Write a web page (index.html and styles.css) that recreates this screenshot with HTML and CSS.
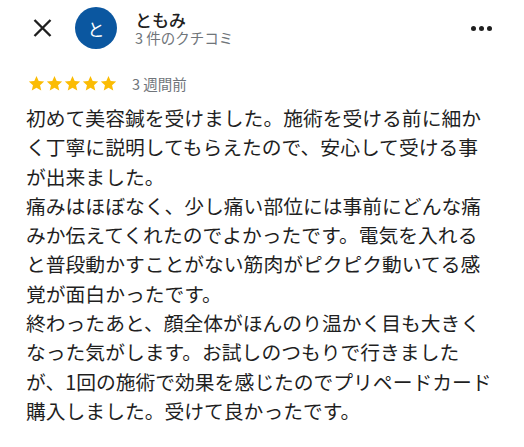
FILE: index.html
```html
<!DOCTYPE html>
<html lang="ja">
<head>
<meta charset="utf-8">
<link rel="stylesheet" href="styles.css">
</head>
<body>
<div class="review">
  <div class="header">
    <svg class="close" width="19" height="18" viewBox="0 0 19 18"><path d="M1.5 1 L17.5 17 M17.5 1 L1.5 17" stroke="#1f1f1f" stroke-width="2.4" fill="none"/></svg>
    <div class="avatar">と</div>
    <div class="info">
      <div class="name">ともみ</div>
      <div class="sub">3 件のクチコミ</div>
    </div>
    <div class="more"><span></span><span></span><span></span></div>
  </div>
  <div class="meta">
    <div class="stars">
      <svg width="17" height="17" viewBox="0 0 24 24"><path d="M12 1.5l3.1 7.1 7.7.7-5.8 5.1 1.7 7.6L12 18l-6.7 4 1.7-7.6-5.8-5.1 7.7-.7z" fill="#fbbc04"/></svg>
      <svg width="17" height="17" viewBox="0 0 24 24"><path d="M12 1.5l3.1 7.1 7.7.7-5.8 5.1 1.7 7.6L12 18l-6.7 4 1.7-7.6-5.8-5.1 7.7-.7z" fill="#fbbc04"/></svg>
      <svg width="17" height="17" viewBox="0 0 24 24"><path d="M12 1.5l3.1 7.1 7.7.7-5.8 5.1 1.7 7.6L12 18l-6.7 4 1.7-7.6-5.8-5.1 7.7-.7z" fill="#fbbc04"/></svg>
      <svg width="17" height="17" viewBox="0 0 24 24"><path d="M12 1.5l3.1 7.1 7.7.7-5.8 5.1 1.7 7.6L12 18l-6.7 4 1.7-7.6-5.8-5.1 7.7-.7z" fill="#fbbc04"/></svg>
      <svg width="17" height="17" viewBox="0 0 24 24"><path d="M12 1.5l3.1 7.1 7.7.7-5.8 5.1 1.7 7.6L12 18l-6.7 4 1.7-7.6-5.8-5.1 7.7-.7z" fill="#fbbc04"/></svg>
    </div>
    <span class="date">3 週間前</span>
  </div>
  <p class="body">初めて美容鍼を受けました。施術を受ける前に細か<br>く丁寧に説明してもらえたので、安心して受ける事<br>が出来ました。<br>痛みはほぼなく、少し痛い部位には事前にどんな痛<br>みか伝えてくれたのでよかったです。電気を入れる<br>と普段動かすことがない筋肉がピクピク動いてる感<br>覚が面白かったです。<br>終わったあと、顔全体がほんのり温かく目も大きく<br>なった気がします。お試しのつもりで行きました<br>が、1回の施術で効果を感じたのでプリペードカード<br>購入しました。受けて良かったです。</p>
</div>
</body>
</html>
```

FILE: styles.css
```css
html, body {
  margin: 0;
  padding: 0;
  background: #ffffff;
}
body {
  font-family: "Noto Sans CJK JP", "Noto Sans", sans-serif;
  color: #1f1f1f;
}
.review {
  padding-top: 7px;
}
.header {
  display: flex;
  align-items: center;
  height: 42px;
  padding-left: 33px;
  padding-right: 32px;
}
.close {
  flex: none;
  margin-right: 23px;
}
.avatar {
  flex: none;
  width: 42px;
  height: 42px;
  border-radius: 50%;
  background: #0b57a0;
  color: #ffffff;
  font-size: 17px;
  display: flex;
  align-items: center;
  justify-content: center;
  margin-right: 18px;
}
.info {
  flex: 1;
  display: flex;
  flex-direction: column;
}
.name {
  font-size: 17px;
  line-height: 19px;
  font-weight: 500;
  color: #1f1f1f;
}
.sub {
  font-size: 14.5px;
  line-height: 18px;
  color: #70757a;
}
.more {
  display: flex;
  gap: 3px;
  align-items: center;
}
.more span {
  width: 5px;
  height: 5px;
  border-radius: 50%;
  background: #1f1f1f;
}
.meta {
  display: flex;
  align-items: center;
  margin-top: 26px;
  padding-left: 28px;
  height: 17px;
}
.stars {
  display: flex;
  gap: 1px;
  margin-right: 15px;
}
.stars svg {
  display: block;
}
.date {
  font-size: 14.5px;
  color: #70757a;
  line-height: 17px;
}
.body {
  margin: 11px 0 0 0;
  padding-left: 26px;
  font-size: 19.8px;
  line-height: 29.3px;
  white-space: nowrap;
}
```
